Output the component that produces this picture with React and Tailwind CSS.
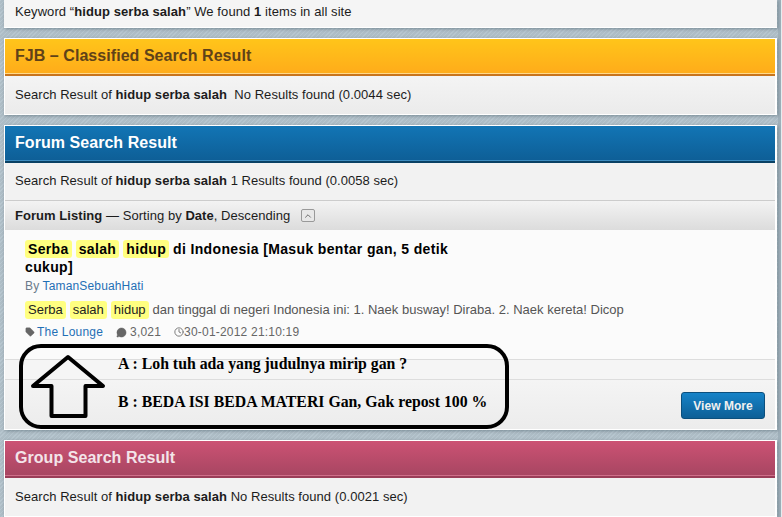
import { Tag, MessageCircle, Clock, ChevronUp } from 'lucide-react';

const hatch = 'bg-[#b3c2cb] bg-[repeating-linear-gradient(135deg,#b7c6cf_0px,#b7c6cf_1px,#aebdc6_1px,#aebdc6_3px)]';

function Mark({ children }) {
  return <span className="bg-[#ffff80] rounded-[3px] px-[3px] mr-[4px] inline-block leading-[18px]">{children}</span>;
}

function Panel({ title, head, bar, line, titleColor, children }) {
  return (
    <section className="border border-white border-r-2 bg-[#f2f2f2] shadow-[1px_1px_3px_rgba(70,90,100,0.5)]">
      <div className={`h-[35px] pl-[10px] flex items-center font-bold text-[16px] tracking-[0.05px] border-b ${head} ${line} ${titleColor}`}>
        {title}
      </div>
      <div className={`h-[2px] ${bar}`}></div>
      {children}
    </section>
  );
}

function ResultLine({ tail, height = 'h-[38px]' }) {
  return (
    <div className={`${height} pl-[10px] flex items-center whitespace-pre`}>
      Search Result of <b>hidup serba salah</b>{tail}
    </div>
  );
}

export default function App() {
  return (
    <div className={`w-[782px] h-[517px] overflow-hidden relative pl-[4px] pr-[4px] flex flex-col gap-[10px] text-[13px] tracking-[0.05px] text-[#1c1c1c] border-r border-[#e6ecef] shadow-[inset_-3px_0_0_#9fb0ba] font-['Liberation_Sans',Arial,sans-serif] ${hatch}`}>
      <div className="h-[28px] shrink-0 bg-[#f5f5f5] border-b border-white pl-[11px] pb-[3px] flex items-center whitespace-pre tracking-[0.08px] shadow-[1px_1px_3px_rgba(70,90,100,0.5)]">
        Keyword “<b>hidup serba salah</b>” We found <b>1</b> items in all site
      </div>

      <Panel
        title="FJB – Classified Search Result"
        head="bg-gradient-to-b from-[#ffc51a] to-[#ffac1a]"
        line="border-[#ffd98a]"
        bar="bg-[#c8741c]"
        titleColor="text-[#5f4218]"
      >
        <div className="bg-gradient-to-b from-[#f4f4f4] to-[#ebebeb]">
          <ResultLine tail="  No Results found (0.0044 sec)" />
        </div>
      </Panel>

      <Panel
        title="Forum Search Result"
        head="bg-gradient-to-b from-[#1275b5] to-[#0e5f97]"
        line="border-[#3d8cc0]"
        bar="bg-[#0a4164]"
        titleColor="text-white"
      >
        <ResultLine height="h-[37px] pb-[1px]" tail=" 1 Results found (0.0058 sec)" />
        <div className="h-[30px] pl-[10px] flex items-center whitespace-pre border-t border-[#cccccc] bg-gradient-to-b from-[#f3f3f3] to-[#dcdcdc]">
          <b>Forum Listing</b> — Sorting by <b>Date</b>, Descending
          <span className="ml-[11px] w-[14px] h-[13px] border border-[#999999] rounded-[2px] bg-[#e8e8e8] flex items-center justify-center">
            <ChevronUp size={10} strokeWidth={2} className="text-[#555555]" />
          </span>
        </div>

        <div className="bg-[#fbfbfb] h-[130px] pl-[20px] pt-[10px] border-b border-[#dddddd]">
          <h3 className="w-[455px] font-bold text-[14px] tracking-[0.35px] leading-[18px] text-black">
            <Mark>Serba</Mark><Mark>salah</Mark><Mark>hidup</Mark>di Indonesia [Masuk bentar gan, 5 detik cukup]
          </h3>
          <div className="text-[12px] tracking-[0.15px] leading-[16px] mt-[2px] text-[#6a7a8a]">
            By <a className="text-[#1f6fb5]">TamanSebuahHati</a>
          </div>
          <p className="mt-[7px] text-[#555555] tracking-normal leading-[18px]">
            <span className="text-[#222222]"><Mark>Serba</Mark><Mark>salah</Mark><Mark>hidup</Mark></span>dan tinggal di negeri Indonesia ini: 1. Naek busway! Diraba. 2. Naek kereta! Dicop
          </p>
          <div className="mt-[4px] flex items-center text-[12px] tracking-[0.2px] text-[#666666]">
            <Tag size={10} fill="#666666" strokeWidth={1} />
            <a className="ml-[2px] text-[#1f6fb5]">The Lounge</a>
            <MessageCircle size={11} fill="#666666" strokeWidth={1} className="ml-[13px]" />
            <span className="ml-[3px]">3,021</span>
            <Clock size={10} strokeWidth={2} className="ml-[13px]" />
            <span>30-01-2012 21:10:19</span>
          </div>
        </div>

        <div className="h-[20px] border-b border-[#dddddd] bg-[#f5f5f5]"></div>

        <div className="h-[49px] pt-[2px] flex items-center justify-end pr-[10px] bg-gradient-to-b from-[#f4f4f4] to-[#ececec]">
          <button className="w-[84px] h-[27px] rounded-[3px] border border-[#0b4f7d] bg-gradient-to-b from-[#1683c8] to-[#0d5f96] text-[#f0f0f0] font-bold text-[12px]">
            View More
          </button>
        </div>
      </Panel>

      <Panel
        title="Group Search Result"
        head="bg-gradient-to-b from-[#cc5274] to-[#a84662]"
        line="border-[#cf6f8a]"
        bar="bg-[#9a3d58]"
        titleColor="text-[#f3e4e9]"
      >
        <ResultLine tail=" No Results found (0.0021 sec)" />
      </Panel>

      {/* hand drawn note on top of the page */}
      <div className="absolute left-[19px] top-[344px] w-[490px] h-[85px] border-[4px] border-black rounded-[22px] text-black font-bold text-[15.8px] tracking-normal font-['Liberation_Serif',serif]">
        <svg className="absolute left-[7px] top-[4px]" width="78" height="72" viewBox="0 0 78 72">
          <path d="M3 34 L38 5 L73 34 L55.5 34 L55.5 64 L21.5 64 L21.5 34 Z" fill="none" stroke="black" strokeWidth="4" strokeLinejoin="round" />
        </svg>
        <div className="absolute left-[95px] top-[7px] whitespace-nowrap leading-[18px]">A : Loh tuh ada yang judulnya mirip gan ?</div>
        <div className="absolute left-[95px] top-[45px] whitespace-nowrap leading-[18px]">B : BEDA ISI BEDA MATERI Gan, Gak repost 100 %</div>
      </div>
    </div>
  );
}
